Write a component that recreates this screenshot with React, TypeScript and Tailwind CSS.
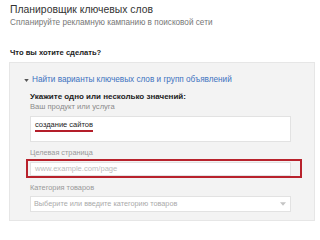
export default function App() {
  return (
    <div className="w-[320px] h-[240px] bg-white overflow-hidden font-['Liberation_Sans',Arial,sans-serif]">
      <div className="pl-[10px] pt-[3px]">
        <h1 className="text-[10.4px] leading-[14px] text-[#333]">Планировщик ключевых слов</h1>
        <p className="text-[8.2px] leading-[11px] text-[#777]">
          Спланируйте рекламную кампанию в поисковой сети
        </p>
        <h2 className="mt-[20px] text-[7.6px] leading-[10px] font-bold text-[#222]">Что вы хотите сделать?</h2>
      </div>

      <div className="mt-[4px] ml-[9px] w-[306px] h-[159px] bg-[#f3f3f3] border border-[#e6e6e6] pt-[12px]">
        <div className="flex items-center pl-[14px] h-[10px]">
          <svg width="5" height="3" viewBox="0 0 6 4" className="mr-[3px]">
            <path d="M0 0h6L3 4z" fill="#555" />
          </svg>
          <span className="text-[8.2px] leading-[10px] text-[#3d72bf]">
            Найти варианты ключевых слов и групп объявлений
          </span>
        </div>

        <div className="pl-[20px] mt-[7px]">
          <p className="text-[8px] leading-[10px] font-bold text-[#222]">Укажите одно или несколько значений:</p>
          <p className="text-[7.6px] leading-[10px] text-[#8a8a8a]">Ваш продукт или услуга</p>

          <div className="mt-[4px] w-[261px] h-[26px] bg-white border border-[#e2e2e2] px-[4px] pt-[3px] flex items-start">
            <span className="relative text-[7.5px] leading-[10px] text-[#222]">
              создание сайтов
              <span className="absolute left-0 right-0 top-[10px] h-[2px] bg-[#b41e2a]" />
            </span>
          </div>

          <p className="text-[7.3px] leading-[10px] text-[#999] mt-[6px]">Целевая страница</p>
          <div className="mt-[1px] -ml-[4px] w-[276px] h-[19px] border-2 border-[#b8222c] pt-[1px] pl-[2px]">
            <div className="h-[14px] w-[261px] bg-white border border-[#e2e2e2] flex items-center px-[4px]">
              <span className="text-[7.6px] leading-[10px] text-[#bbb]">www.example.com/page</span>
            </div>
          </div>

          <p className="text-[7.4px] leading-[10px] text-[#999] mt-[5px]">Категория товаров</p>
          <div className="mt-[3px] w-[261px] h-[16px] bg-white border border-[#e2e2e2] flex items-center justify-between pl-[3px] pr-[4px]">
            <span className="text-[7.3px] leading-[10px] text-[#aaa]">Выберите или введите категорию товаров</span>
            <svg width="6" height="4" viewBox="0 0 7 4">
              <path d="M0 0h7L3.5 4z" fill="#c4c4c4" />
            </svg>
          </div>
        </div>
      </div>
    </div>
  );
}
